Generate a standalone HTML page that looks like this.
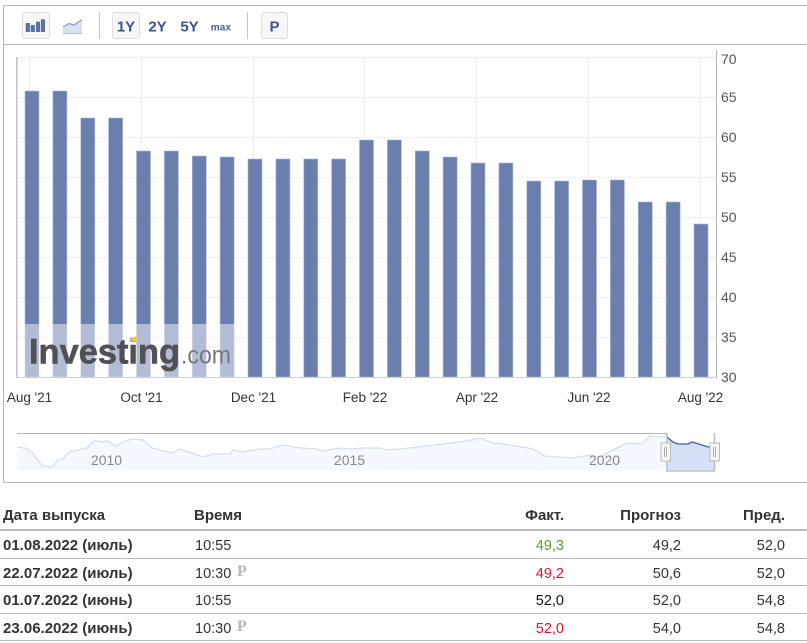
<!DOCTYPE html>
<html><head><meta charset="utf-8">
<style>
html,body{margin:0;padding:0;background:#fff}
body{width:807px;height:643px;overflow:hidden;position:relative;font-family:"Liberation Sans",Arial,sans-serif;color:#333}
svg{position:absolute;left:0;top:0}
.t{position:absolute;font-size:14.5px;line-height:16px;white-space:nowrap;color:#333}
.b{font-weight:bold;font-size:15px}
.r{text-align:right;width:80px}
.l{position:absolute;left:0;width:807px;background:#bbb;height:1px}
</style></head><body>
<svg width="807" height="643" viewBox="0 0 807 643" font-family="Liberation Sans, Arial, sans-serif">
<!-- frame -->
<path d="M3.5 483V5.5H807M4 482.5H807M4 44.5H807" fill="none" stroke="#b5b5b5"/>
<!-- toolbar -->
<rect x="22.5" y="12.5" width="27" height="26" rx="3" fill="#f7f7f7" stroke="#ddd"/>
<rect x="25.700" y="23" width="4.200" height="9" fill="#5a71a8"/><rect x="30.700" y="25" width="4.200" height="7" fill="#5a71a8"/><rect x="36" y="21.700" width="4" height="10.300" fill="#5a71a8"/><rect x="40.800" y="19.300" width="4.200" height="12.700" fill="#5a71a8"/>
<path d="M63 27L69 23.500L74 25L82 19.500V33H63Z" fill="#d9e0ef"/>
<path d="M63 27L69 23.500L74 25L82 19.500" fill="none" stroke="#8fa3c8" stroke-width="1.300"/>
<path d="M63 33.500H82" stroke="#b5bfd4"/>
<path d="M99.500 12V39M247.500 12V39" stroke="#c4c4c4"/>
<rect x="112.500" y="12.500" width="27" height="26" rx="3" fill="#f7f7f7" stroke="#ddd"/>
<rect x="261.500" y="12.500" width="26" height="26" rx="3" fill="#f7f7f7" stroke="#ddd"/>
<g font-size="15" font-weight="bold" text-anchor="middle" fill="#3d5294">
<text x="126" y="31.500">1Y</text><text x="157.500" y="31.500">2Y</text><text x="189.500" y="31.500">5Y</text><text x="274.500" y="31.500">P</text>
</g>
<text x="221" y="30.500" font-size="10" font-weight="bold" text-anchor="middle" fill="#4a5f9c" letter-spacing="0.200">max</text>
<!-- grid -->
<path d="M17 57.500H716M17 97.500H716M17 137.500H716M17 177.500H716M17 217.500H716M17 257.500H716M17 297.500H716M17 337.500H716" stroke="#f1f1f1" stroke-width="1.500"/>
<path d="M29.500 57V377M141.500 57V377M253.500 57V377M364.500 57V377M476.500 57V377M588.500 57V377M700.500 57V377" stroke="#f1f1f1" stroke-width="1.500"/>
<path d="M16.800 57V378" stroke="#c4c4c4" stroke-width="1.500"/>
<path d="M716.500 50V378" stroke="#b5b5b5"/>
<!-- bars -->
<g fill="#6b7fae" stroke="#a9b6d2" stroke-width="0.600">
<rect x="25" y="91" width="14" height="286"/><rect x="52.900" y="91" width="14" height="286"/>
<rect x="80.800" y="118" width="14" height="259"/><rect x="108.600" y="118" width="14" height="259"/>
<rect x="136.500" y="151" width="14" height="226"/><rect x="164.400" y="151" width="14" height="226"/>
<rect x="192.300" y="156" width="14" height="221"/><rect x="220.100" y="157" width="14" height="220"/>
<rect x="248" y="159" width="14" height="218"/><rect x="275.900" y="159" width="14" height="218"/>
<rect x="303.800" y="159" width="14" height="218"/><rect x="331.600" y="159" width="14" height="218"/>
<rect x="359.500" y="140" width="14" height="237"/><rect x="387.400" y="140" width="14" height="237"/>
<rect x="415.300" y="151" width="14" height="226"/><rect x="443.100" y="157" width="14" height="220"/>
<rect x="471" y="163" width="14" height="214"/><rect x="498.900" y="163" width="14" height="214"/>
<rect x="526.800" y="181" width="14" height="196"/><rect x="554.600" y="181" width="14" height="196"/>
<rect x="582.500" y="180" width="14" height="197"/><rect x="610.400" y="180" width="14" height="197"/>
<rect x="638.300" y="202" width="14" height="175"/><rect x="666.100" y="202" width="14" height="175"/>
<rect x="694" y="224" width="14" height="153"/>
</g>
<path d="M17 377.500H716" stroke="#c8d0e0"/>
<!-- watermark -->
<rect x="18" y="324" width="217" height="53" fill="#fff" fill-opacity="0.48"/>
<text x="29" y="363.500" font-size="35.500" font-weight="bold" fill="#515155" stroke="#515155" stroke-width="0.600" textLength="151" lengthAdjust="spacingAndGlyphs">Investing</text>
<text x="181" y="363.500" font-size="25" fill="#77777b" textLength="50" lengthAdjust="spacingAndGlyphs">.com</text>
<path d="M131 338.500L137 336V341.500H131Z" fill="#eec95c"/>
<!-- y labels -->
<g font-size="14" fill="#555">
<text x="721" y="64">70</text><text x="721" y="102">65</text><text x="721" y="142">60</text><text x="721" y="182">55</text><text x="721" y="222">50</text><text x="721" y="262">45</text><text x="721" y="302">40</text><text x="721" y="342">35</text><text x="721" y="382">30</text>
</g>
<!-- x labels -->
<g font-size="13.500" fill="#333" text-anchor="middle">
<text x="29.500" y="402">Aug '21</text><text x="141.500" y="402">Oct '21</text><text x="253.500" y="402">Dec '21</text><text x="365" y="402">Feb '22</text><text x="477" y="402">Apr '22</text><text x="589" y="402">Jun '22</text><text x="700.500" y="402">Aug '22</text>
</g>
<!-- navigator -->
<path d="M17 433.500H667" stroke="#b5b5b5"/>
<path d="M17 447L25 448L33 453L42 466L52 467L58 460L63 459L69 452L87 448L95 440L100 442L108 441L115 446L125 441L133 439L143 440L152 448L172 453L180 449L203 457L213 454L230 454L233 450L242 452L260 449L270 449L282 445L300 448L317 449L322 451L340 448L353 449L363 448L380 448L387 450L400 449L427 446L467 441L480 438L493 443L510 445L533 449L545 456L573 458L590 455L600 457L613 450L627 443L642 444L650 436L667 437V470H17Z" fill="#f5f8fe"/>
<path d="M17 447L25 448L33 453L42 466L52 467L58 460L63 459L69 452L87 448L95 440L100 442L108 441L115 446L125 441L133 439L143 440L152 448L172 453L180 449L203 457L213 454L230 454L233 450L242 452L260 449L270 449L282 445L300 448L317 449L322 451L340 448L353 449L363 448L380 448L387 450L400 449L427 446L467 441L480 438L493 443L510 445L533 449L545 456L573 458L590 455L600 457L613 450L627 443L642 444L650 436L667 437" fill="none" stroke="#d3dff0" stroke-width="1.300"/>
<path d="M667 437L673 442L678 444L688 444L692 442L702 445L708 447L714 447V470H667Z" fill="#d5e0f7"/>
<path d="M667 437L673 442L678 444L688 444L692 442L702 445L708 447L714 447" fill="none" stroke="#3f5fa8" stroke-width="1.300"/>
<path d="M667 433V471H714.500V433" fill="none" stroke="#bdbdbd" stroke-width="1.500"/>
<g font-size="14" fill="#888" text-anchor="middle">
<text x="106.500" y="465">2010</text><text x="349.500" y="465">2015</text><text x="604.500" y="465">2020</text>
</g>
<rect x="661" y="443" width="9.500" height="18" fill="#f6f6f6" stroke="#bbb"/>
<rect x="710" y="443" width="9.500" height="18" fill="#f6f6f6" stroke="#bbb"/>
<path d="M664.500 447V457M666.500 447V457M713.500 447V457M715.500 447V457" stroke="#aaa"/>
<!-- P icons -->
<g font-family="Liberation Serif, serif" font-size="16" font-weight="bold" fill="#b8b8b8">
<text x="237" y="576">P</text><text x="237" y="631">P</text>
</g>
</svg>
<div class="l" style="top:529px;height:2px;background:#bbb"></div>
<div class="l" style="top:558px"></div>
<div class="l" style="top:585px"></div>
<div class="l" style="top:613px"></div>
<div class="l" style="top:640px"></div>

<div class="t b" style="left:3px;top:508px">Дата выпуска</div>
<div class="t b" style="left:194px;top:508px">Время</div>
<div class="t b r" style="left:484px;top:508px">Факт.</div>
<div class="t b r" style="left:601px;top:508px">Прогноз</div>
<div class="t b r" style="left:705px;top:508px">Пред.</div>

<div class="t b" style="left:3px;top:538px">01.08.2022 (июль)</div>
<div class="t" style="left:195px;top:538px">10:55</div>
<div class="t r" style="left:484px;top:538px;color:#5b9e32">49,3</div>
<div class="t r" style="left:601px;top:538px">49,2</div>
<div class="t r" style="left:705px;top:538px">52,0</div>

<div class="t b" style="left:3px;top:566px">22.07.2022 (июль)</div>
<div class="t" style="left:195px;top:566px">10:30</div>
<div class="t r" style="left:484px;top:566px;color:#e0152d">49,2</div>
<div class="t r" style="left:601px;top:566px">50,6</div>
<div class="t r" style="left:705px;top:566px">52,0</div>

<div class="t b" style="left:3px;top:593px">01.07.2022 (июнь)</div>
<div class="t" style="left:195px;top:593px">10:55</div>
<div class="t r" style="left:484px;top:593px;color:#111">52,0</div>
<div class="t r" style="left:601px;top:593px">52,0</div>
<div class="t r" style="left:705px;top:593px">54,8</div>

<div class="t b" style="left:3px;top:621px">23.06.2022 (июнь)</div>
<div class="t" style="left:195px;top:621px">10:30</div>
<div class="t r" style="left:484px;top:621px;color:#e0152d">52,0</div>
<div class="t r" style="left:601px;top:621px">54,0</div>
<div class="t r" style="left:705px;top:621px">54,8</div>
</body></html>
